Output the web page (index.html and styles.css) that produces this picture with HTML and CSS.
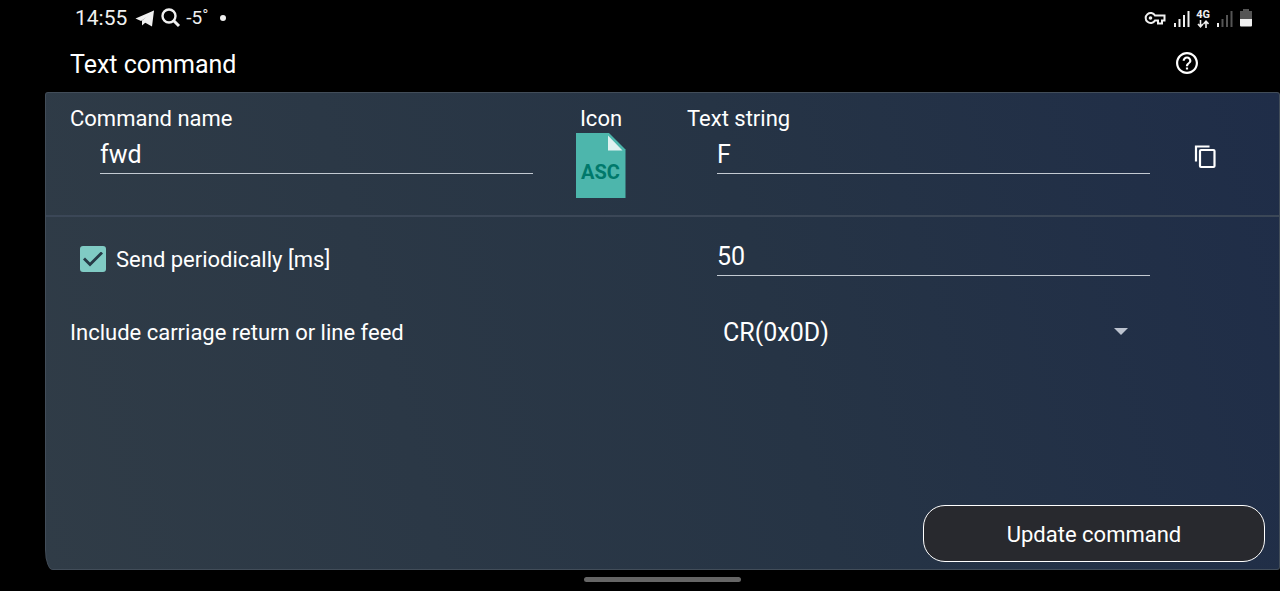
FILE: index.html
```
<!DOCTYPE html>
<html lang="en">
<head>
<meta charset="utf-8">
<meta name="viewport" content="width=device-width, initial-scale=1">
<title>Text command</title>
<link rel="stylesheet" href="styles.css">
</head>
<body>
<div class="status">
  <div class="status-group">
    <span class="clock">14:55</span>
    <svg class="plane" width="20" height="17" viewBox="0 0 20 17"><path d="M19 0.500 0.500 8.500 6 11 15 5 9 12 17 16.500z" fill="#f0f0f0"/><path d="M19 0.500 7 10.500V15.500L10.500 12.500z" fill="#f0f0f0"/></svg>
    <svg class="search" width="20" height="20" viewBox="0 0 20 20" fill="none" stroke="#f0f0f0"><circle cx="8" cy="8" r="6.500" stroke-width="2.400"/><path d="m12 12 6 6" stroke-width="3"/></svg>
    <span class="temp">-5˚</span>
    <span class="dot"></span>
  </div>
  <div class="status-group">
    <svg width="22" height="14" viewBox="0 0 22 14" fill="none" stroke="#f0f0f0" stroke-width="2"><path d="M11 4.500A5 5 0 1 0 11 9.500H14V12.500H18V9.500H20.500V4.500Z"/><circle cx="6.500" cy="7" r="1.800" fill="#f0f0f0" stroke="none"/></svg>
    <svg class="signal" width="16" height="17" viewBox="0 0 16 17" fill="#f0f0f0"><path d="M0 13h2v4H0zM4.500 9h2v8h-2zM9 5h2v12H9zM13.500 1h2v16h-2z"/></svg>
    <span class="network">
      <span>4G</span>
      <svg width="12" height="8" viewBox="0 0 12 8" fill="none" stroke="#f0f0f0" stroke-width="1.600"><path d="M3.500 0v6.500M1 4l2.500 2.700L6 4M9 8V1.500M6.500 4 9 1.300 11.500 4"/></svg>
    </span>
    <svg class="signal-weak" width="16" height="17" viewBox="0 0 16 17" fill="#555"><path fill="#f0f0f0" d="M0 13h2v4H0z"/><path d="M4.500 9h2v8h-2zM9 5h2v12H9zM13.500 1h2v16h-2z"/></svg>
    <svg class="battery" width="12" height="18" viewBox="0 0 12 18"><path d="M3 0h6v2h3v9H0V2h3z" fill="#555"/><path d="M0 10h12v6.500a1 1 0 0 1-1 1H1a1 1 0 0 1-1-1z" fill="#f0f0f0"/></svg>
  </div>
</div>
<header class="header">
  <h1>Text command</h1>
  <button class="icon-button" type="button" aria-label="Help">
    <svg width="22" height="22" viewBox="2 2 20 20" fill="#fff"><path d="M11 18h2v-2h-2v2zm1-16C6.480 2 2 6.480 2 12s4.480 10 10 10 10-4.480 10-10S17.520 2 12 2zm0 18c-4.410 0-8-3.590-8-8s3.590-8 8-8 8 3.590 8 8-3.590 8-8 8zm0-14c-2.210 0-4 1.790-4 4h2c0-1.100.9-2 2-2s2 .9 2 2c0 2-3 1.750-3 5h2c0-2.250 3-2.500 3-5 0-2.210-1.790-4-4-4z"/></svg>
  </button>
</header>
<form class="panel">
  <section class="row row-top">
    <div class="field">
      <label for="name">Command name</label>
      <input class="line-input" id="name" type="text" value="fwd">
    </div>
    <div class="icon-field">
      <span>Icon</span>
      <button class="icon-button" type="button" aria-label="Choose icon">
        <svg width="50" height="65" viewBox="0 0 50 65"><path d="M0 0h33l16.500 16.500V65H0z" fill="#4db6ac"/><path d="M32 2.500V17.500H46.500z" fill="#e0f2f1"/><text class="file-text" x="24.500" y="46" text-anchor="middle">ASC</text></svg>
      </button>
    </div>
    <div class="field">
      <label for="text">Text string</label>
      <input class="line-input" id="text" type="text" value="F">
    </div>
    <button class="icon-button copy" type="button" aria-label="Copy">
      <svg width="22" height="25" viewBox="0 0 22 25" fill="none" stroke="#fff" stroke-width="2.200"><path d="M2 17.500V2.500H15.500"/><rect x="6" y="6" width="14.500" height="17" rx="1"/></svg>
    </button>
  </section>
  <section class="row row-options">
    <div class="check">
      <input class="checkbox" type="checkbox" id="periodic" checked>
      <label for="periodic">Send periodically [ms]</label>
    </div>
    <div class="field option-field">
      <input class="line-input" type="text" value="50" aria-label="Period in milliseconds">
    </div>
    <label class="ending-label" for="ending">Include carriage return or line feed</label>
    <div class="select-wrap">
      <select class="select" id="ending"><option>CR(0x0D)</option><option>LF(0x0A)</option></select>
    </div>
  </section>
  <div class="actions">
    <button class="update" type="submit">Update command</button>
  </div>
</form>
<div class="nav"><span class="handle"></span></div>
</body>
</html>
```
FILE: styles.css
```
* { box-sizing: border-box; }
body {
  margin: 0;
  min-height: 100vh;
  display: flex;
  flex-direction: column;
  background: #000;
  color: #fff;
  font: 22px/26px Roboto, sans-serif;
}
svg { display: block; }
button, input, select { font: inherit; color: inherit; margin: 0; }
.status {
  display: flex;
  justify-content: space-between;
  align-items: center;
  height: 36px;
  padding: 0 28px 0 75px;
  color: #f0f0f0;
}
.status-group { display: flex; align-items: center; }
.clock { font-size: 21px; }
.plane { margin-left: 8px; }
.search { margin-left: 6px; }
.temp { margin-left: 5px; font-size: 19px; }
.dot { width: 6px; height: 6px; margin-left: 11px; border-radius: 50%; background: #f0f0f0; }
.signal { margin-left: 8px; }
.network {
  display: flex;
  flex-direction: column;
  align-items: center;
  margin-left: 6px;
  font-size: 11px;
  font-weight: 700;
  line-height: 11px;
}
.signal-weak { margin-left: 7px; }
.battery { margin-left: 7px; }
.header {
  display: flex;
  justify-content: space-between;
  align-items: center;
  height: 56px;
  padding: 0 82px 2px 70px;
}
.header h1 { margin: 0; padding-top: 4px; font-size: 25px; line-height: 32px; font-weight: 400; }
.icon-button { display: block; padding: 0; border: 0; background: none; cursor: pointer; }
.panel {
  flex: 1;
  display: flex;
  flex-direction: column;
  margin-left: 45px;
  border: 1px solid #424d59;
  border-radius: 3px 3px 3px 8px / 3px 3px 3px 20px;
  background: linear-gradient(75deg, #303c47 0%, #263445 58%, #1f2d48 100%);
}
.row {
  display: grid;
  grid-template-columns: 463fr 154fr 463fr 110fr;
  padding: 0 19px 0 24px;
}
.row-top {
  padding-top: 13px;
  padding-bottom: 17px;
  border-bottom: 2px solid #3b4757;
}
.field { display: flex; flex-direction: column; }
.line-input {
  width: auto;
  min-width: 0;
  height: 42px;
  margin-left: 30px;
  padding: 4px 0 0;
  border: 0;
  border-bottom: 1px solid #c3cad2;
  border-radius: 0;
  outline: 0;
  background: none;
  font-size: 25px;
}
.icon-field {
  display: flex;
  flex-direction: column;
  align-items: center;
  gap: 1px;
  padding-right: 18px;
}
.file-text { font: 700 20px Roboto, sans-serif; fill: #00796b; }
.copy { place-self: start center; padding-top: 38px; }
.row-options { grid-template-rows: 80px 70px; }
.check { display: flex; align-items: center; padding: 4px 0 0 10px; gap: 10px; }
.check label { padding-top: 2px; }
.checkbox {
  appearance: none;
  display: grid;
  place-items: center;
  width: 26px;
  height: 26px;
  border-radius: 3px;
  background: #80cbc4;
}
.checkbox:checked::before {
  content: "";
  width: 20px;
  height: 15px;
  background: #263a46;
  clip-path: polygon(0 8px, 2px 6px, 7px 11px, 18px 0, 20px 2px, 7px 15px);
}
.option-field { grid-column: 3; padding-top: 17px; }
.ending-label { grid-column: 1 / 3; align-self: center; padding-top: 2px; }
.select-wrap { position: relative; align-self: center; margin-left: 30px; }
.select {
  appearance: none;
  display: block;
  width: 100%;
  height: 40px;
  padding: 2px 32px 0 6px;
  border: 0;
  outline: 0;
  background: none;
  font-size: 25px;
}
.select option { background: #253244; }
.select-wrap::after {
  content: "";
  position: absolute;
  right: 22px;
  top: 16px;
  border: 7px solid transparent;
  border-top-color: #bcc3cf;
  border-bottom: 0;
  pointer-events: none;
}
.actions { display: flex; justify-content: flex-end; margin-top: auto; padding: 0 14px 7px; }
.update {
  width: 342px;
  max-width: 100%;
  height: 57px;
  padding-top: 3px;
  border: 1px solid #fff;
  border-radius: 22px;
  background: #28292e;
  cursor: pointer;
}
.nav { display: flex; justify-content: center; padding: 7px 0 9px 45px; }
.handle { width: 157px; height: 5px; border-radius: 3px; background: #666; }
```
